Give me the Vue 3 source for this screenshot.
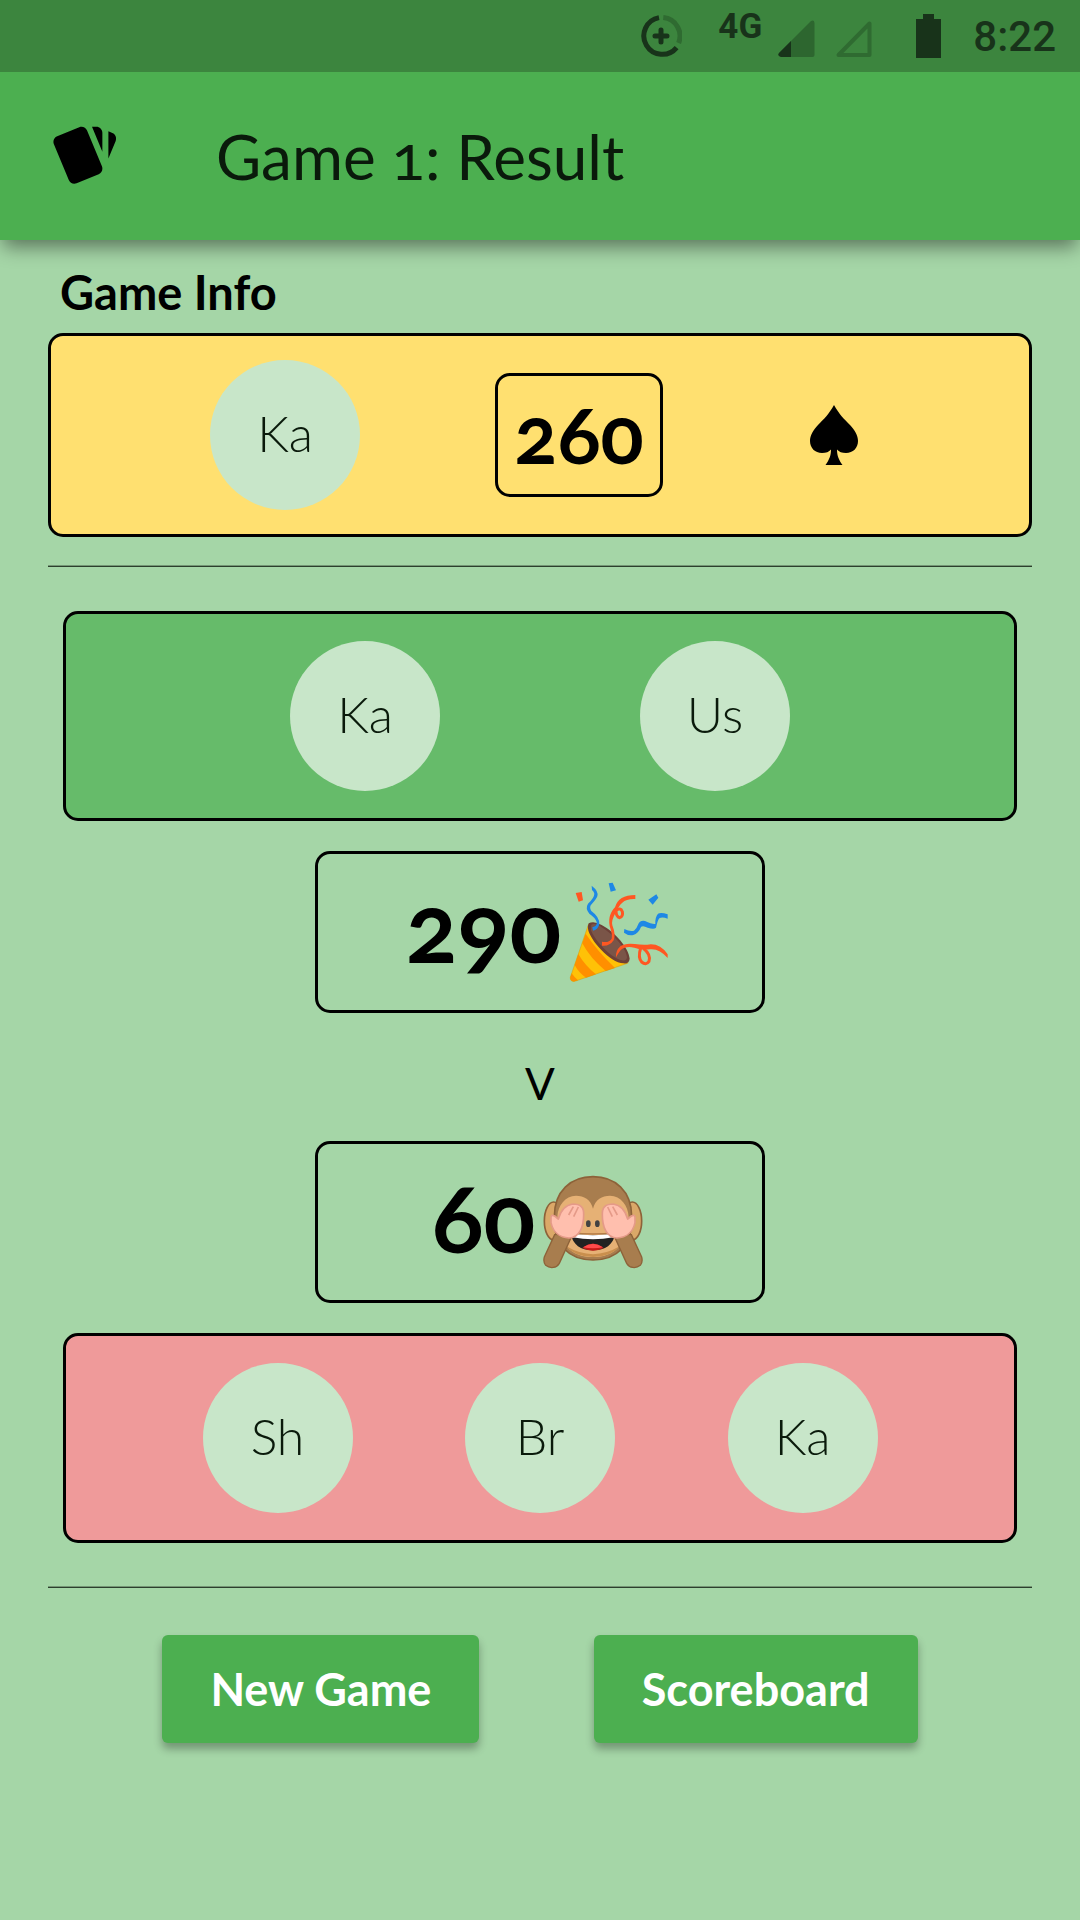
<script setup>
const bid = { player: 'Ka', points: 260 }
const winners = ['Ka', 'Us']
const losers = ['Sh', 'Br', 'Ka']
</script>

<template>
  <div class="screen">
    <div class="status">
      <svg class="saver" viewBox="0 0 42 42" aria-hidden="true">
        <path class="stroke" d="M19 2.6A18.5 18.5 0 1 0 36.6 32.6" />
        <path class="stroke faint" d="M23.3 2.6A18.5 18.5 0 0 1 38.6 28" />
        <path class="plus" d="M21 15v12M15 21h12" />
      </svg>
      <span class="network">4G</span>
      <svg class="signal" viewBox="0 0 37 37" aria-hidden="true">
        <path class="faint-fill" d="M36.500 3v32q0 2-2 2H3Q-1 36 1 33L32.500 1.500Q36-1 36.500 3Z" />
        <path class="solid" d="M13 21v16H3Q-1 36 1 33Z" />
      </svg>
      <svg class="signal second" viewBox="0 0 37 37" aria-hidden="true">
        <path class="outline" d="M34.500 3.500v31.500H3.500Z" />
      </svg>
      <svg class="battery" viewBox="0 0 25 44" aria-hidden="true">
        <path class="solid" d="M7 0h11v5h7v39H0V5h7Z" />
      </svg>
      <time class="clock">8:22</time>
    </div>

    <header class="bar">
      <svg class="cards" viewBox="0 0 24 24" aria-hidden="true">
        <g transform="rotate(180 12 12)">
          <path d="M2.530 19.650l1.340.560v-9.030l-2.430 5.860c-.410 1.020.080 2.190 1.090 2.610zM22.030 15.950L17.070 3.980c-.310-.750-1.040-1.210-1.810-1.230-.260 0-.530.040-.790.150L7.100 5.950c-.750.310-1.210 1.030-1.230 1.800-.010.270.040.540.150.800l4.960 11.970c.310.760 1.050 1.220 1.830 1.230.260 0 .520-.050.770-.150l7.360-3.050c1.020-.420 1.510-1.590 1.090-2.600zM5.880 19.750c0 1.100.900 2 2 2h1.450l-3.450-8.340v6.340z" />
        </g>
      </svg>
      <h1>Game 1: Result</h1>
    </header>

    <main>
      <h2>Game Info</h2>
      <section class="panel info">
        <span class="avatar">{{ bid.player }}</span>
        <strong class="bid">{{ bid.points }}</strong>
        <span class="suit">
          <svg viewBox="0 0 48 60" role="img" aria-label="Spades">
            <path d="M24 0C29 9 34 14 40 20C45 25 48 31 48 36C48 43 43 48 36 48C32 48 29 47 27 44.500C27 51 29 55 32.500 60H15.500C19 55 21 51 21 44.500C19 47 16 48 12 48C5 48 0 43 0 36C0 31 3 25 8 20C14 14 19 9 24 0Z" />
          </svg>
        </span>
      </section>

      <hr />

      <section class="teams">
        <div class="panel team won">
          <span v-for="name in winners" :key="name" class="avatar">{{ name }}</span>
        </div>

        <div class="score">
          <strong>290</strong>
          <svg class="emoji" viewBox="84 64 300 300" role="img" aria-label="Party popper">
            <path fill="#ffc107" d="M143 190L88 350Q87 364 101 362L262 307Z" />
            <path fill="#ff8f00" d="M134 219Q168 270 222 322L194 331Q147 292 124 248ZM112 280Q132 315 165 341L135 351Q113 336 101 313ZM92 338Q101 351 111 359L101 362Q87 364 88 350Z" />
            <path d="M143 190L88 350Q87 364 101 362L262 307" fill="none" stroke="#d99a00" stroke-opacity=".5" stroke-width="3" />
            <path fill="#6d4037" d="M143 188Q158 179 182 193C222 214 264 263 266 294Q264 311 247 308C207 306 145 236 141 204Q140 194 143 188Z" />
            <path fill="#7a5548" d="M151 192Q164 186 184 201C222 224 257 266 258 290Q256 302 243 299C210 293 157 234 150 208Z" />
            <path fill="#1e88e5" d="M152 75Q174 92 169 107Q166 116 153 129Q143 138 151 151Q176 169 175 191Q170 208 156 210L154 200Q169 197 167 184Q162 170 145 159Q132 143 141 129Q160 111 160 99Q159 93 153 88ZM203 68L215 66L225 89L209 93ZM322 117L346 101L352 111L335 132ZM250 205Q267 214 279 210Q287 204 291 192Q296 178 312 181Q332 191 343 190Q342 169 351 159Q360 154 380 161V174Q363 167 355 173Q350 178 345 201Q339 207 320 201Q305 193 300 199Q292 219 277 223Q264 227 249 216Z" />
            <path fill="#ff5722" d="M104 97L122 94L126 119L113 123ZM283 103V115Q256 114 244 126Q234 134 225 154Q210 180 214 194Q225 222 218 239Q205 258 183 255V243Q203 248 212 234Q215 223 206 196C201 169 211 152 222 140Q232 103 283 103Z" />
            <path d="M225 149Q225 169 236 171Q247 168 244 153Q239 139 224 150M299 262Q290 291 302 304Q315 315 324 302Q331 282 307 263" fill="none" stroke="#ff5722" stroke-width="9" />
            <path fill="#ff5722" d="M225 290Q223 271 238 257Q253 246 282 250Q300 253 319 252Q356 246 380 281V292Q354 262 326 266Q302 269 280 261Q258 256 244 264Q235 270 225 290Z" />
          </svg>
        </div>

        <p class="versus">V</p>

        <div class="score">
          <strong>60</strong>
          <svg class="emoji" viewBox="75 64 300 300" role="img" aria-label="See-no-evil monkey">
            <g stroke="#8d6239" stroke-width="5">
              <ellipse cx="107" cy="211" rx="28" ry="57" fill="#dba868" />
              <ellipse cx="343" cy="211" rx="28" ry="57" fill="#dba868" />
              <path fill="#a87d4e" d="M109 197C109 122 158 78 225 78S341 122 341 197C345 284 296 328 225 328S105 284 109 197Z" />
            </g>
            <path fill="#e6b175" d="M225 174C232 146 252 135 276 135C309 136 330 164 332 198C328 279 292 319 225 319S122 279 118 198C120 164 141 136 174 135C198 135 218 146 225 174Z" />
            <path fill="#c98f4d" d="M145 287Q225 334 305 287Q279 319 225 319T145 287Z" />
            <ellipse cx="211" cy="219" rx="7" ry="10" fill="#424242" />
            <ellipse cx="238" cy="219" rx="7" ry="10" fill="#424242" />
            <path d="M158 246Q225 254 292 246" fill="none" stroke="#b47c46" stroke-width="4" />
            <path fill="#222" d="M158 250Q225 257 292 250C285 282 263 299 225 299S165 282 158 250Z" />
            <path fill="#fff" d="M160 250Q225 257 290 250L286 260Q225 272 164 260Z" />
            <path fill="#c61b17" d="M193 292Q225 266 257 292Q241 300 225 300T193 292Z" />
            <path fill="#ff4b4b" d="M195 290Q225 269 255 290Q225 296 195 290Z" />
            <g stroke="#8d6239" stroke-width="4">
              <path fill="#a87d4e" d="M110 252Q134 247 159 261L124 338C116 352 97 355 83 344Q75 335 79 319Z" />
              <path fill="#a87d4e" d="M340 252Q316 247 291 261L326 338C334 352 353 355 367 344Q375 335 371 319Z" />
            </g>
            <g fill="#ffbfae" stroke="#e59a88" stroke-width="5" stroke-linejoin="round">
              <path d="M99 199Q101 191 110 196L121 205Q132 165 164 160C188 160 198 170 197 192C197 227 185 262 153 262C125 261 105 244 99 216Z" />
              <path d="M351 199Q349 191 340 196L329 205Q318 165 286 160C262 160 252 170 253 192C253 227 265 262 297 262C325 261 345 244 351 216Z" />
              <path fill="none" d="M152 193L166 168M167 198L181 169M298 193L284 168M283 198L269 169" />
            </g>
          </svg>
        </div>

        <div class="panel team lost">
          <span v-for="name in losers" :key="name" class="avatar">{{ name }}</span>
        </div>
      </section>

      <hr />

      <div class="actions">
        <button type="button">New Game</button>
        <button type="button">Scoreboard</button>
      </div>
    </main>
  </div>
</template>

<style>
body {
  margin: 0;
  background: #a5d6a7;
}
</style>

<style scoped>
.screen {
  min-height: 100vh;
  background: #a5d6a7;
  color: #000;
  font-family: Lato, "Noto Sans", sans-serif;
  font-variant-numeric: oldstyle-nums;
}

.status {
  position: relative;
  z-index: 1;
  display: flex;
  align-items: center;
  justify-content: flex-end;
  height: 72px;
  padding-right: 24px;
  background: #3c853e;
  color: #18331a;
  font-family: Roboto, sans-serif;
  font-weight: 500;
  font-variant-numeric: normal;
}

.saver {
  width: 42px;
  height: 42px;
}

.stroke,
.plus {
  fill: none;
  stroke: #18331a;
  stroke-width: 5;
}

.plus {
  stroke-linecap: round;
}

.faint {
  stroke: #2f6b31;
}

.solid {
  fill: #18331a;
}

.faint-fill {
  fill: #2d662f;
}

.outline {
  fill: none;
  stroke: #2f6b31;
  stroke-width: 4;
  stroke-linejoin: round;
}

.network {
  margin-left: 36px;
  padding-bottom: 18px;
  font-size: 35px;
  font-weight: 700;
  line-height: 24px;
}

.signal {
  width: 37px;
  height: 37px;
  margin: 5px 0 0 16px;
}

.second {
  margin-left: 20px;
}

.battery {
  width: 25px;
  height: 44px;
  margin-left: 44px;
}

.clock {
  margin-left: 32px;
  font-size: 42px;
}

.bar {
  display: flex;
  align-items: center;
  gap: 96px;
  height: 168px;
  padding: 0 48px;
  background: #4caf50;
  box-shadow: 0 10px 18px -3px rgba(0, 0, 0, 0.45);
}

.cards {
  flex: none;
  width: 72px;
  height: 72px;
}

h1 {
  margin: 0;
  color: #0a1a0b;
  font-size: 62px;
  font-weight: 400;
}

main {
  padding: 24px 48px;
}

h2 {
  margin: 0 12px 13px;
  font-size: 47px;
  font-weight: 700;
  line-height: 56px;
}

.panel {
  display: flex;
  align-items: center;
  justify-content: space-evenly;
  padding: 24px;
  border: 3px solid #000;
  border-radius: 15px;
}

.info {
  background: #ffe070;
}

.avatar {
  display: flex;
  align-items: center;
  justify-content: center;
  box-sizing: border-box;
  width: 150px;
  height: 150px;
  padding-bottom: 4px;
  border-radius: 50%;
  background: #c8e6c9;
  color: #0a1a0b;
  font-size: 50px;
  font-weight: 300;
}

.bid {
  display: flex;
  align-items: center;
  justify-content: center;
  box-sizing: border-box;
  width: 168px;
  height: 124px;
  padding-bottom: 4px;
  border: 3px solid #000;
  border-radius: 15px;
  font-size: 80px;
}

.suit {
  display: flex;
  justify-content: center;
  width: 72px;
}

.suit svg {
  width: 48px;
  height: 60px;
}

hr {
  height: 1px;
  margin: 28px 0 44px;
  border: 0;
  border-top: 1px solid #749675;
  background: #2c402d;
}

.teams {
  display: flex;
  flex-direction: column;
  margin: 0 15px;
}

.team {
  padding: 27px 24px;
}

.won {
  margin-bottom: 30px;
  background: #66bb6a;
}

.lost {
  margin-top: 30px;
  background: #ef9a9a;
}

.score {
  display: flex;
  align-items: center;
  align-self: center;
  justify-content: center;
  gap: 8px;
  box-sizing: border-box;
  width: 450px;
  height: 162px;
  border: 3px solid #000;
  border-radius: 15px;
  font-size: 96px;
}

.score strong {
  padding-bottom: 14px;
}

.emoji {
  width: 100px;
  height: 100px;
  margin-right: 5px;
}

.versus {
  margin: 12px 0 0;
  font-size: 44px;
  line-height: 116px;
  text-align: center;
}

.teams + hr {
  margin: 43px 0 47px;
}

.actions {
  display: flex;
  justify-content: space-evenly;
}

button {
  height: 108px;
  padding: 0 48px;
  border: 0;
  border-radius: 6px;
  background: #4caf50;
  box-shadow: 0 6px 9px rgba(0, 0, 0, 0.3);
  color: #fff;
  font-family: inherit;
  font-size: 45px;
  font-weight: 700;
}
</style>
